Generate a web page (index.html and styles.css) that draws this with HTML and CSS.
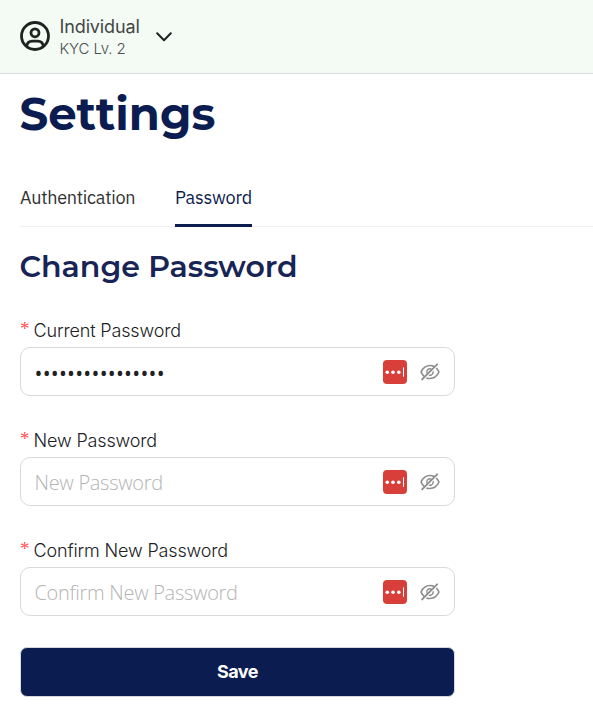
FILE: index.html
```html
<!DOCTYPE html>
<html lang="en">
<head>
<meta charset="utf-8">
<title>Settings</title>
<link rel="stylesheet" href="styles.css">
</head>
<body>
<svg class="defs" aria-hidden="true">
  <symbol id="eye-off" viewBox="64 64 896 896"><path d="M942.2 486.2Q889.47 375.11 816.7 305l-50.88 50.88C807.31 395.53 843.45 447.4 874.7 512 791.5 684.2 673.4 766 512 766q-72.67 0-133.87-22.38L323 798.75Q408 838 512 838q288.3 0 430.2-300.3a60.29 60.29 0 000-51.5zm-63.57-320.64L836 122.88a8 8 0 00-11.32 0L715.31 232.2Q624.86 186 512 186q-288.3 0-430.2 300.3a60.3 60.3 0 000 51.5q56.69 119.4 136.5 191.41L112.48 835a8 8 0 000 11.31L155.17 889a8 8 0 0011.31 0l712.15-712.12a8 8 0 000-11.32zM149.3 512C232.6 339.8 350.7 258 512 258c54.54 0 104.13 9.36 149.12 28.39l-70.3 70.3a176 176 0 00-238.13 238.13l-83.42 83.42C223.1 637.49 183.3 582.28 149.3 512zm246.7 0a112.11 112.11 0 01146.2-106.69L401.31 546.2A112 112 0 01396 512z"/><path d="M508 624c-3.46 0-6.87-.16-10.25-.47l-52.82 52.82a176.09 176.09 0 00227.42-227.42l-52.82 52.82c.31 3.38.47 6.79.47 10.25a111.94 111.94 0 01-112 112z"/></symbol>
  <symbol id="vault" viewBox="0 0 24 24"><rect width="24" height="24" rx="4" fill="#d83f3b"/><g fill="#fff"><circle cx="4.3" cy="12.2" r="1.8"/><circle cx="10" cy="12.2" r="1.8"/><circle cx="15.8" cy="12.2" r="1.8"/><rect x="20" y="7.4" width="1" height="9.4"/></g></symbol>
</svg>
<header class="topbar">
  <svg class="avatar" viewBox="0 0 30 30" fill="none" stroke="#202322" stroke-width="2.8"><circle cx="15" cy="15" r="13.5"/><circle cx="15" cy="11.8" r="4"/><path d="M6.6 25.3C7.2 21.7 9.2 20.2 12.2 20.2h5.6c3 0 5 1.5 5.6 5.1"/></svg>
  <div class="account"><span class="name">Individual</span><span class="level">KYC Lv. 2</span></div>
  <svg class="chevron" viewBox="0 0 16 10" fill="none" stroke="#202322" stroke-width="2" stroke-linecap="round" stroke-linejoin="round"><path d="M1.2 1.3 8 8.2l6.8-6.9"/></svg>
</header>
<main>
  <h1>Settings</h1>
  <nav class="tabs"><a>Authentication</a><a class="active">Password</a></nav>
  <h2>Change Password</h2>
  <form>
    <div class="field">
      <label for="current"><i>*</i><span>Current Password</span></label>
      <div class="control"><input id="current" type="password" value="abcdefghijklmnop"><svg class="vault"><use href="#vault"/></svg><svg class="eye"><use href="#eye-off"/></svg></div>
    </div>
    <div class="field">
      <label for="new"><i>*</i><span>New Password</span></label>
      <div class="control"><input id="new" type="password" placeholder="New Password"><svg class="vault"><use href="#vault"/></svg><svg class="eye"><use href="#eye-off"/></svg></div>
    </div>
    <div class="field">
      <label for="confirm"><i>*</i><span>Confirm New Password</span></label>
      <div class="control"><input id="confirm" type="password" placeholder="Confirm New Password"><svg class="vault"><use href="#vault"/></svg><svg class="eye"><use href="#eye-off"/></svg></div>
    </div>
    <button type="button">Save</button>
  </form>
</main>
</body>
</html>
```
FILE: styles.css
```css
* { box-sizing: border-box; }
body { margin: 0; background: #fff; color: #202124; font-family: Inter, "Liberation Sans", sans-serif; overflow: hidden; }
.defs { position: absolute; width: 0; height: 0; }
.topbar { display: flex; align-items: center; height: 74px; padding: 0 20px 1px; background: #f3fbf4; border-bottom: 1px solid #dcdfdd; }
.avatar { width: 30px; height: 30px; margin-right: 10px; }
.account { display: flex; flex-direction: column; width: 80px; margin-top: 1px; margin-left: -.5px; white-space: nowrap; }
.name { font-size: 18px; line-height: 24px; color: #434645; letter-spacing: -.12px; }
.level { font-size: 15px; line-height: 20px; font-weight: 300; color: #4b4f4d; letter-spacing: -.1px; }
.chevron { width: 16px; height: 10px; margin-left: 16px; margin-top: 2px; }
main { padding-left: 20px; }
h1, h2 { margin: 0 0 0 -.5px; font-family: Montserrat, Inter, sans-serif; color: #0b1c50; white-space: nowrap; }
h1 { height: 94px; padding-top: 12px; font-size: 45px; line-height: 56px; font-weight: 700; }
h2 { height: 87px; padding-top: 20px; font-size: 30px; line-height: 40px; font-weight: 600; color: #172455; }
.tabs { display: flex; gap: 40px; height: 59px; border-bottom: 1px solid #f0f0f0; font: 18px/24px "IBM Plex Sans", "Open Sans", sans-serif; white-space: nowrap; }
.tabs a { height: 59px; padding-top: 18px; color: #303234; width: 115px; letter-spacing: -.27px; }
.tabs .active { width: 77px; color: #0b1c50; border-bottom: 3px solid #0b1c50; letter-spacing: -.15px; }
.field { height: 110px; padding-top: 5px; }
label { display: flex; height: 28px; font-size: 18px; line-height: 24px; font-weight: 300; letter-spacing: -.15px; white-space: nowrap; }
label i { width: 13.5px; font: 400 19px/19px "Liberation Serif", serif; color: #ff4d4f; }
.control { display: flex; align-items: center; width: 435px; height: 49px; padding: 0 14px 0 13.5px; border: 1px solid #d9d9d9; border-radius: 10px; }
input { flex: 1; min-width: 0; height: 30px; padding: 2px 0 0; border: 0; outline: 0; background: none; font: 400 21px/28px "Open Sans", sans-serif; color: #202124; letter-spacing: .25px; }
input:placeholder-shown { padding: 0; }
input::placeholder { color: #b4b4b4; opacity: 1; font-size: 20px; font-weight: 300; letter-spacing: -.29px; }
.vault { width: 24px; height: 24px; margin-right: 13px; }
.eye { width: 20px; height: 20px; fill: #8c8c8c; }
button { display: block; width: 435px; height: 50px; margin-top: 3px; padding: 0 6px; border: 1px solid #d5d7df; border-radius: 7px; background: #0b1c50; color: #fff; font: 700 18px/24px Inter, sans-serif; letter-spacing: -.5px; }
```
